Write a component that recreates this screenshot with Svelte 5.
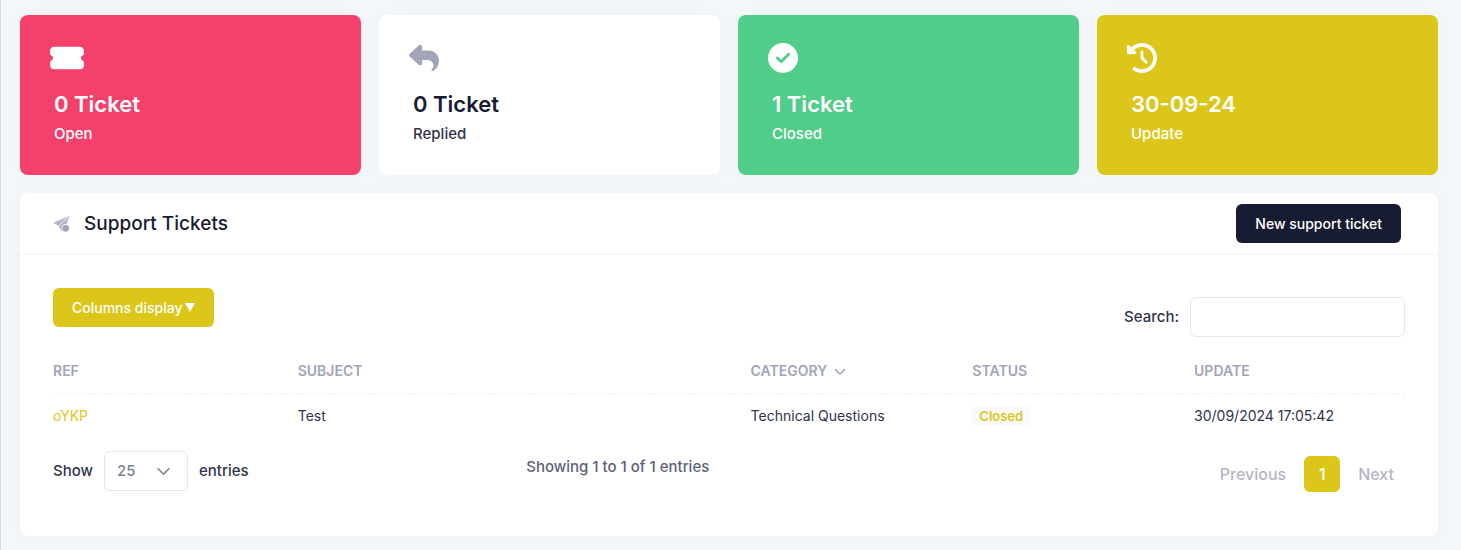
<script>
  const stats = [
    {
      tone: 'danger', value: '0 Ticket', label: 'Open', width: 34, box: '0 0 576 512',
      path: 'M0 128C0 92.7 28.7 64 64 64H512c35.3 0 64 28.7 64 64v64c0 8.8-7.4 15.7-15.7 18.6C541.5 217.1 528 235 528 256s13.5 38.9 32.3 45.4c8.3 2.9 15.7 9.8 15.7 18.6v64c0 35.3-28.7 64-64 64H64c-35.3 0-64-28.7-64-64V320c0-8.8 7.4-15.7 15.7-18.6C34.5 294.9 48 277 48 256s-13.5-38.9-32.3-45.4C7.4 207.7 0 200.8 0 192V128z'
    },
    {
      tone: 'plain', value: '0 Ticket', label: 'Replied', width: 30, box: '0 0 512 512',
      path: 'M205 34.8c11.5 5.1 19 16.6 19 29.2v64H336c97.2 0 176 78.8 176 176c0 113.3-81.5 163.9-100.2 174.1c-2.5 1.4-5.3 1.9-8.1 1.9c-10.9 0-19.7-8.9-19.7-19.7c0-7.5 4.3-14.4 9.8-19.5c9.4-8.8 22.2-26.4 22.2-56.7c0-53-43-96-96-96H224v64c0 12.6-7.4 24.1-19 29.2s-25 3-34.4-5.4l-160-144C3.9 225.7 0 217.1 0 208s3.9-17.7 10.6-23.8l160-144c9.4-8.5 22.9-10.6 34.4-5.4z'
    },
    {
      tone: 'success', value: '1 Ticket', label: 'Closed', width: 30, box: '0 0 512 512',
      path: 'M256 512A256 256 0 1 0 256 0a256 256 0 1 0 0 512zM369 209L241 337c-9.4 9.4-24.6 9.4-33.9 0l-64-64c-9.4-9.4-9.4-24.6 0-33.9s24.6-9.4 33.9 0l47 47L335 175c9.4-9.4 24.6-9.4 33.9 0s9.4 24.6 0 33.9z'
    },
    {
      tone: 'primary', value: '30-09-24', label: 'Update', width: 30, box: '0 0 512 512',
      path: 'M75 75L41 41C25.9 25.9 0 36.6 0 57.9V168c0 13.3 10.7 24 24 24H134.1c21.4 0 32.1-25.9 17-41l-30.8-30.8C155 85.5 203 64 256 64c106 0 192 86 192 192s-86 192-192 192c-40.8 0-78.6-12.7-109.7-34.4c-14.5-10.1-34.4-6.6-44.6 7.9s-6.6 34.4 7.9 44.6C151.2 495 201.7 512 256 512c141.4 0 256-114.6 256-256S397.4 0 256 0C185.3 0 121.3 28.7 75 75zm181 53c-13.3 0-24 10.7-24 24V256c0 6.4 2.5 12.5 7 17l72 72c9.4 9.4 24.6 9.4 33.9 0s9.4-24.6 0-33.9l-65-65V152c0-13.3-10.7-24-24-24z'
    }
  ];
  const tickets = [
    { ref: 'oYKP', subject: 'Test', category: 'Technical Questions', status: 'Closed', update: '30/09/2024 17:05:42' }
  ];
  let query = $state('');
  let size = $state('25');
</script>

<main>
  <section class="stats">
    {#each stats as s}
      <article class="stat {s.tone}">
        <svg width={s.width} height="30" viewBox={s.box} aria-hidden="true"><path d={s.path} /></svg>
        <strong>{s.value}</strong>
        <span>{s.label}</span>
      </article>
    {/each}
  </section>

  <section class="panel">
    <header>
      <h1>
        <svg width="18" height="18" viewBox="0 0 18 18" aria-hidden="true">
          <path d="M1.2 7.3 15.4 1.2Q16.6.8 16.2 2L13.6 9.2A4.3 4.3 0 0 0 8.5 13.2Q8.5 14.6 9.2 15.8Q8.3 16.4 7.8 15.4L5.6 10.8 1.1 8.6Q.2 7.9 1.2 7.3Z" fill="#b4b7c7" />
          <path d="M5.6 10.8 15.6 1.7" stroke="#fff" stroke-width=".8" fill="none" />
          <circle cx="12.7" cy="13.3" r="3.4" fill="#a1a5b7" />
        </svg>
        Support Tickets
      </h1>
      <button class="btn dark">New support ticket</button>
    </header>

    <div class="body">
      <div class="tools">
        <button class="btn gold">Columns display<svg width="10" height="9" viewBox="0 0 10 9" aria-hidden="true"><path d="M0 0H10L5 9Z" fill="#fff" /></svg></button>
        <div class="search">
          <label for="search">Search:</label>
          <input id="search" type="search" bind:value={query} />
        </div>
      </div>

      <table>
        <colgroup>
          <col class="c-ref" /><col class="c-subject" /><col class="c-mid" /><col class="c-mid" /><col />
        </colgroup>
        <thead>
          <tr>
            <th>REF</th>
            <th>SUBJECT</th>
            <th>CATEGORY<svg class="sort" width="12" height="8" viewBox="0 0 12 8" aria-hidden="true"><path d="M1.5 1.5 6 6 10.5 1.5" fill="none" stroke="#a1a5b7" stroke-width="1.6" stroke-linecap="round" stroke-linejoin="round" /></svg></th>
            <th>STATUS</th>
            <th>UPDATE</th>
          </tr>
        </thead>
        <tbody>
          {#each tickets as t}
            <tr>
              <td><a href="#{t.ref}">{t.ref}</a></td>
              <td>{t.subject}</td>
              <td>{t.category}</td>
              <td><span class="badge">{t.status}</span></td>
              <td>{t.update}</td>
            </tr>
          {/each}
        </tbody>
      </table>

      <div class="foot">
        <div class="length">
          <label for="size">Show</label>
          <select id="size" bind:value={size}>
            <option>25</option>
            <option>50</option>
            <option>100</option>
          </select>
          <span>entries</span>
        </div>
        <p>Showing 1 to 1 of 1 entries</p>
        <nav aria-label="Pages">
          <button disabled>Previous</button>
          <button class="current">1</button>
          <button disabled>Next</button>
        </nav>
      </div>
    </div>
  </section>
</main>

<style>
  :global(body) {
    background: #f3f7fa;
  }
  main {
    box-sizing: border-box;
    min-height: 100vh;
    padding: 15px 23px 13px 19px;
    border-left: 1px solid #d6dade;
    font-family: Inter, sans-serif;
    font-size: 14px;
    line-height: 20px;
    color: #2f344c;
  }
  button, input, select {
    font: inherit;
    box-sizing: border-box;
    margin: 0;
  }
  .stats {
    display: grid;
    grid-template-columns: repeat(4, 1fr);
    gap: 18px;
  }
  .stat, .panel {
    border-radius: 8px;
    background: #fff;
    box-shadow: 0 0 20px rgba(76, 87, 125, 0.02);
  }
  .stat {
    box-sizing: border-box;
    display: flex;
    flex-direction: column;
    padding: 28px 30px 31px;
    color: #fff;
    fill: #fff;
  }
  .stat strong {
    margin: 16px 4px 5px;
    font-size: 22px;
    line-height: 30px;
    font-weight: 600;
  }
  .stat span {
    margin: 0 4px;
    font-size: 15px;
    font-weight: 500;
  }
  .danger { background: #f4416c; }
  .success { background: #50cd89; }
  .primary { background: #dcc61a; }
  .plain { color: #2f344c; fill: #a1a5b7; }
  .plain strong { color: #181c32; }

  .panel { margin-top: 18px; }
  header {
    display: flex;
    align-items: center;
    justify-content: space-between;
    padding: 11px 37px 11px 33px;
    border-bottom: 1px solid #f1f3f6;
  }
  h1 {
    display: flex;
    align-items: center;
    gap: 13px;
    margin: 0;
    font-size: 19px;
    line-height: 26px;
    font-weight: 500;
    color: #181c32;
  }
  .btn {
    height: 39px;
    padding: 0 19px;
    border: 0;
    border-radius: 6px;
    color: #fff;
    font-weight: 500;
  }
  .dark { background: #181c32; }
  .gold {
    display: flex;
    align-items: center;
    gap: 2px;
    background: #dcc61a;
  }
  .body { padding: 33px 33px 44px; }
  .tools {
    display: flex;
    justify-content: space-between;
    align-items: flex-start;
  }
  .search {
    display: flex;
    align-items: center;
    gap: 11px;
    padding-top: 9px;
    font-size: 15px;
    font-weight: 500;
  }
  .search input {
    width: 215px;
    height: 40px;
    padding: 0 12px;
    border: 1px solid #e4e6ef;
    border-radius: 6px;
    background: #fff;
    appearance: none;
  }
  table {
    width: 100%;
    margin-top: 12px;
    border-collapse: collapse;
    table-layout: fixed;
  }
  .c-ref { width: 18.1%; }
  .c-subject { width: 33.5%; }
  .c-mid { width: 16.4%; }
  th, td {
    padding: 12px 0;
    text-align: left;
    white-space: nowrap;
  }
  th {
    color: #a1a5b7;
    font-weight: 600;
    border-bottom: 1px dashed #eff2f5;
  }
  .sort { margin-left: 7px; }
  a { color: #dcc61a; text-decoration: none; }
  .badge {
    display: inline-block;
    padding: 0 7px;
    border-radius: 5px;
    background: #f9f9f9;
    color: #dcc61a;
    font-size: 13px;
    font-weight: 600;
  }
  .foot {
    display: grid;
    grid-template-columns: 35% 1fr auto;
    align-items: center;
    padding-top: 12px;
  }
  .length {
    display: flex;
    align-items: center;
    gap: 11px;
    font-size: 15px;
    font-weight: 500;
  }
  select {
    width: 84px;
    height: 40px;
    padding: 0 12px;
    border: 1px solid #e4e6ef;
    border-radius: 6px;
    appearance: none;
    color: #7e8299;
    background: #fff url("data:image/svg+xml,%3Csvg xmlns='http://www.w3.org/2000/svg' viewBox='0 0 12 8'%3E%3Cpath d='M1 1.5 6 6.5 11 1.5' fill='none' stroke='%237e8299' stroke-width='1.5' stroke-linecap='round' stroke-linejoin='round'/%3E%3C/svg%3E") no-repeat right 17px center / 13px 9px;
  }
  p {
    margin: 0;
    padding-bottom: 8px;
    font-size: 15px;
    font-weight: 500;
    color: #5e6278;
  }
  nav {
    display: flex;
    justify-content: flex-end;
    gap: 7px;
    padding-top: 6px;
  }
  nav button {
    min-width: 36px;
    height: 36px;
    padding: 0 11px;
    border: 0;
    border-radius: 6px;
    background: transparent;
    font-size: 16px;
    font-weight: 500;
    color: #b5b5c3;
  }
  nav .current { background: #dcc61a; color: #fff; }
</style>
